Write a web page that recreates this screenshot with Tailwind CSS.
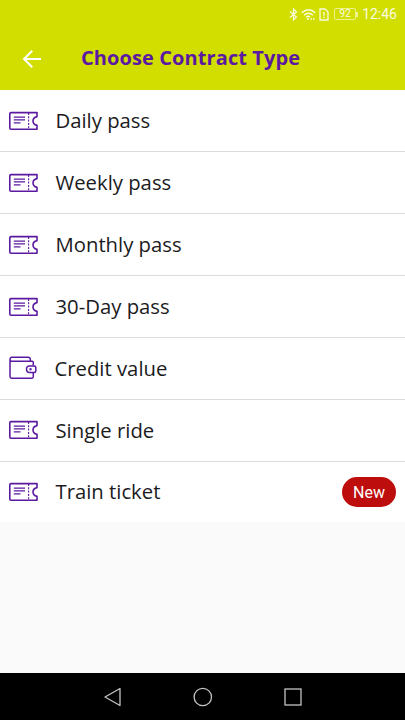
<!DOCTYPE html>
<html lang="en">
<head>
<meta charset="utf-8">
<title>Choose Contract Type</title>
<script src="https://cdn.jsdelivr.net/npm/@tailwindcss/browser@4"></script>
</head>
<body class="w-[405px] h-[720px] overflow-hidden bg-[#fafafa] font-['Open_Sans','Noto_Sans',sans-serif] flex flex-col">
<svg class="hidden">
  <symbol id="ticket" viewBox="0 0 30 20">
    <path d="M29 1.6H3Q1.8 1.6 1.8 2.8V17Q1.8 18.2 3 18.2H29V14.4Q25 13.4 25 10T29 5.6Z" fill="none" stroke="#5b1aa0" stroke-width="1.6" stroke-linejoin="round"/>
    <path d="M5.8 6.1H17M5.8 8.8H17M5.8 11.8H12.5" stroke="#5b1aa0" stroke-width="1.2"/>
    <path d="M20.6 2V18" stroke="#5b1aa0" stroke-width="1.1" stroke-dasharray="2 1.3"/>
  </symbol>
</svg>
<header class="h-[90px] shrink-0 bg-[#d1de00]">
  <div class="h-7 flex items-center justify-end pr-[8px] text-[#fafbe0]">
    <svg class="w-[9px] h-[13px] mr-[3px]" viewBox="0 0 9 13" fill="none" stroke="currentColor" stroke-width="1.2"><path d="M1 3.5L7.5 9L4.5 12V1L7.5 4L1 9.5"/></svg>
    <svg class="w-[15px] h-[13px] mr-[3px]" viewBox="0 0 15 13" fill="none" stroke="currentColor" stroke-width="1.4"><path d="M.8 4.8Q7.5-1.2 14.2 4.8M3 7.2Q7.5 3.2 12 7.2M5.2 9.4Q7.5 7.4 9 9"/><path d="M6 11h2M9.5 11h1.5M12 11h1.5" stroke-width="1.7"/></svg>
    <svg class="w-[10px] h-[13px] mr-[5px]" viewBox="0 0 10 13" fill="none" stroke="currentColor" stroke-width="1.3"><path d="M1 1H6L9 4V12H1Z"/><path d="M5 4V7.8M5 8.8V10" stroke-width="1.4"/></svg>
    <div class="w-[22px] h-[12px] border border-[#edf38f] rounded-[2px] flex items-center justify-center font-[Roboto,sans-serif] text-[10.5px] leading-none pt-px">92</div>
    <div class="w-[2px] h-[5px] bg-[#edf38f] mr-[4px]"></div>
    <span class="font-[Roboto,sans-serif] text-[14px] leading-none">12:46</span>
  </div>
  <div class="h-[60px] flex items-center pl-[22px]">
    <svg class="w-[20px] h-[20px]" viewBox="0 0 20 20" fill="none" stroke="#fff" stroke-width="2"><path d="M19 11H2M10.3 2.7L2 11L10.3 19.3"/></svg>
    <h1 class="ml-[39px] text-[20px] tracking-[.09px] font-bold leading-7 text-[#5b1aa0] whitespace-nowrap">Choose Contract Type</h1>
  </div>
</header>
<main class="h-[432px] shrink-0 bg-white grid grid-rows-[repeat(6,62px)_60px] text-[20.3px] leading-7 text-[#1b1b1d]">
  <div class="flex items-center pl-2 border-b border-[#dcdcdc]"><svg class="w-[30px] h-5 mr-[17.5px] mt-px"><use href="#ticket"/></svg><span class="pb-0.5">Daily pass</span></div>
  <div class="flex items-center pl-2 border-b border-[#dcdcdc]"><svg class="w-[30px] h-5 mr-[17.5px] mt-px"><use href="#ticket"/></svg><span class="pb-0.5">Weekly pass</span></div>
  <div class="flex items-center pl-2 border-b border-[#dcdcdc]"><svg class="w-[30px] h-5 mr-[17.5px]"><use href="#ticket"/></svg><span class="pb-0.5">Monthly pass</span></div>
  <div class="flex items-center pl-2 border-b border-[#dcdcdc]"><svg class="w-[30px] h-5 mr-[17.5px]"><use href="#ticket"/></svg><span class="pb-0.5">30-Day pass</span></div>
  <div class="flex items-center pl-2 border-b border-[#dcdcdc]">
    <svg class="w-[30px] h-6 mr-[16.5px] mb-px" viewBox="0 0 30 24" fill="none" stroke="#5b1aa0" stroke-width="1.5" stroke-linejoin="round"><path d="M25.3 9.8V6.3Q25.3 5.2 24.2 5.2H3.5Q2 5.2 2 3.5T3.5 1.3H20Q22.3 1.3 22.3 3.5V5M2 3.5V20.5Q2 22.2 3.5 22.2H24Q25.3 22.2 25.3 20.5V16.5"/><path d="M21.5 10H26.2Q27.8 10 27.8 11.5V15Q27.8 16.5 26.2 16.5H21.5Q18.5 16.5 18.5 13.2T21.5 10Z"/><circle cx="22.5" cy="13.2" r=".5"/></svg><span class="pb-0.5">Credit value</span></div>
  <div class="flex items-center pl-2 border-b border-[#dcdcdc]"><svg class="w-[30px] h-5 mr-[17.5px] mb-px"><use href="#ticket"/></svg><span class="pb-0.5">Single ride</span></div>
  <div class="flex items-center pl-2 pr-[9px]"><svg class="w-[30px] h-5 mr-[17.5px]"><use href="#ticket"/></svg><span class="pb-0.5">Train ticket</span><span class="ml-auto w-[54px] h-[30px] rounded-full bg-[#bd0d0d] text-white font-[Roboto,sans-serif] text-[16px] flex items-center justify-center pt-0.5">New</span></div>
</main>
<div class="flex-1"></div>
<nav class="h-[47px] shrink-0 bg-black flex items-center justify-between pl-[103px] pr-[102px]">
  <svg class="w-5 h-5" viewBox="0 0 20 20" fill="none" stroke="#c4c4c4" stroke-width="1.3" stroke-linejoin="round"><path d="M17 1.5V18.5L2 10Z"/></svg>
  <svg class="w-5 h-5" viewBox="0 0 20 20" fill="none" stroke="#c4c4c4" stroke-width="1.3"><circle cx="9.8" cy="10" r="8.7"/></svg>
  <svg class="w-5 h-5" viewBox="0 0 20 20" fill="none" stroke="#c4c4c4" stroke-width="1.3"><rect x="2" y="2" width="16" height="16"/></svg>
</nav>
</body>
</html>
